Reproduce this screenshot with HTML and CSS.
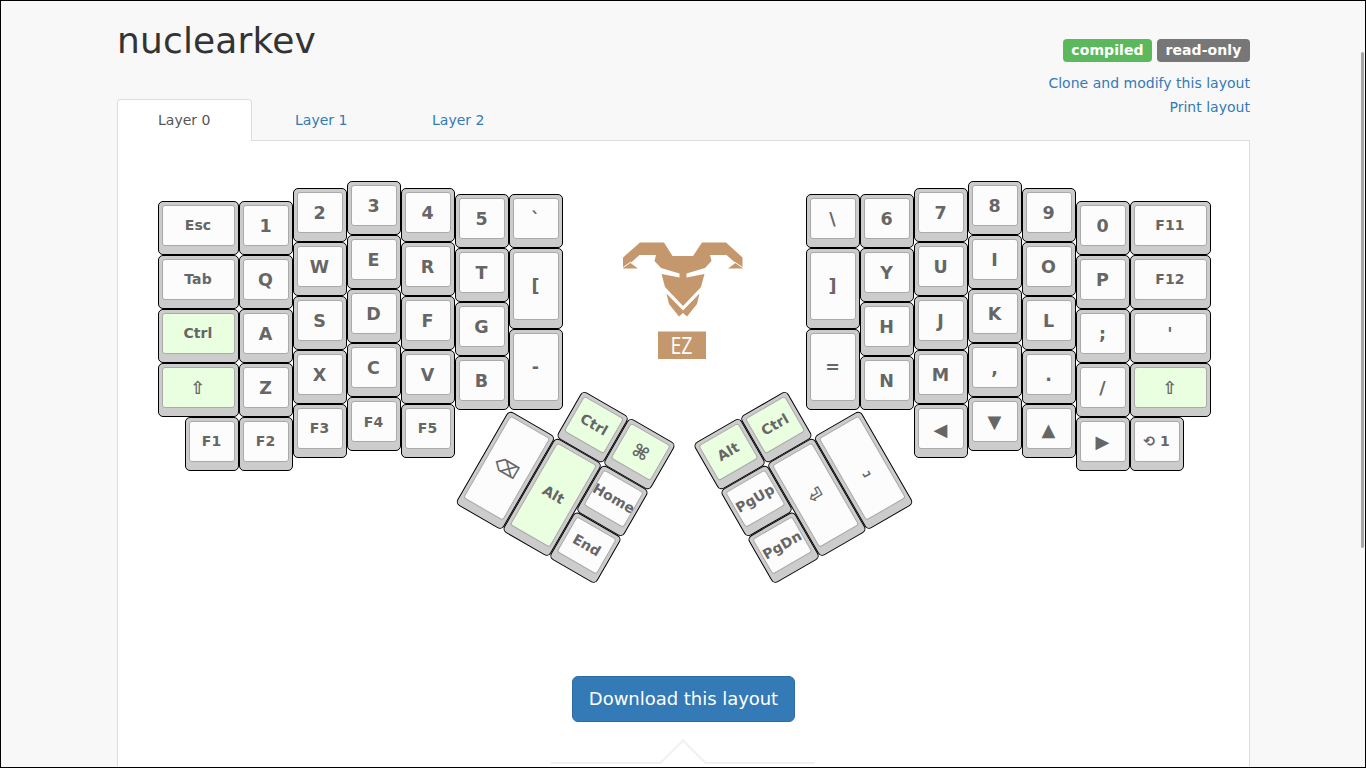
FILE: index.html
```html
<!DOCTYPE html>
<html lang="en">
<head>
<meta charset="utf-8">
<title>nuclearkev</title>
<link rel="stylesheet" href="styles.css">
</head>
<body>
<div class="window">
  <div class="scrollbar"></div>
  <main class="container">
    <header class="header">
      <h1>nuclearkev</h1>
      <div class="meta">
        <div class="badges"><span class="badge ok">compiled</span><span class="badge">read-only</span></div>
        <a>Clone and modify this layout</a>
        <a>Print layout</a>
      </div>
    </header>
    <nav class="tabs"><a class="tab active">Layer 0</a><a class="tab">Layer 1</a><a class="tab">Layer 2</a></nav>
    <section class="panel">
      <div class="keyboard">
        <div class="half">
          <div class="col wide s20"><div class="key"><b class="w">Esc</b></div><div class="key"><b class="w">Tab</b></div><div class="key mod"><b class="w">Ctrl</b></div><div class="key mod"><b class="sym">⇧</b></div><div class="key single end"><b class="w">F1</b></div></div>
          <div class="col s20"><div class="key"><b>1</b></div><div class="key"><b>Q</b></div><div class="key"><b>A</b></div><div class="key"><b>Z</b></div><div class="key"><b class="w">F2</b></div></div>
          <div class="col s7"><div class="key"><b>2</b></div><div class="key"><b>W</b></div><div class="key"><b>S</b></div><div class="key"><b>X</b></div><div class="key"><b class="w">F3</b></div></div>
          <div class="col"><div class="key"><b>3</b></div><div class="key"><b>E</b></div><div class="key"><b>D</b></div><div class="key"><b>C</b></div><div class="key"><b class="w f4">F4</b></div></div>
          <div class="col s7"><div class="key"><b>4</b></div><div class="key"><b>R</b></div><div class="key"><b>F</b></div><div class="key"><b>V</b></div><div class="key"><b class="w">F5</b></div></div>
          <div class="col s13"><div class="key"><b>5</b></div><div class="key"><b>T</b></div><div class="key"><b>G</b></div><div class="key"><b>B</b></div></div>
          <div class="col s13"><div class="key"><b>`</b></div><div class="key tall"><b>[</b></div><div class="key tall"><b>-</b></div></div>
        </div>
        <svg class="logo" width="120" height="118" viewBox="0 0 120 118">
          <g fill="#c5976c">
            <path d="M0 15.500 17 .5H41L49.500 14H70L79 .5H103L119.500 15.500V26.500H105L112.500 21 103.500 13H87L88.500 19 82 26 63.500 31.500V35.500L81.500 32 78 45 60 64 42 45 38.500 32 56.500 35.500V31.500L38 26 31.500 19 33 13H16.500L7.500 21 15 26.500H0Z"/>
            <path d="M43.500 51.500 60 68.500 76.500 51.500 74 62 64 74.500 60 71 56 74.500 46 62Z"/>
            <path d="M35 89.500H83V117H35Z"/>
          </g>
          <path d="M0 25.500 8 20M119.500 25.500 111.500 20" stroke="#fff" fill="none"/>
          <text x="58.500" y="111.500" textLength="22" lengthAdjust="spacingAndGlyphs">EZ</text>
        </svg>
        <div class="half">
          <div class="col s13"><div class="key"><b>\</b></div><div class="key tall"><b>]</b></div><div class="key tall"><b>=</b></div></div>
          <div class="col s13"><div class="key"><b>6</b></div><div class="key"><b>Y</b></div><div class="key"><b>H</b></div><div class="key"><b>N</b></div></div>
          <div class="col s7"><div class="key"><b>7</b></div><div class="key"><b>U</b></div><div class="key"><b>J</b></div><div class="key"><b>M</b></div><div class="key"><b class="sym low">◀</b></div></div>
          <div class="col"><div class="key"><b>8</b></div><div class="key"><b>I</b></div><div class="key"><b>K</b></div><div class="key"><b>,</b></div><div class="key"><b class="sym">▼</b></div></div>
          <div class="col s7"><div class="key"><b>9</b></div><div class="key"><b>O</b></div><div class="key"><b>L</b></div><div class="key"><b>.</b></div><div class="key"><b class="sym low">▲</b></div></div>
          <div class="col s20"><div class="key"><b>0</b></div><div class="key"><b>P</b></div><div class="key"><b>;</b></div><div class="key"><b>/</b></div><div class="key"><b class="sym">▶</b></div></div>
          <div class="col wide s20"><div class="key"><b class="w">F11</b></div><div class="key"><b class="w">F12</b></div><div class="key"><b>'</b></div><div class="key mod"><b class="sym">⇧</b></div><div class="key single"><b class="w">⟲ 1</b></div></div>
        </div>
        <div class="thumb left">
          <div class="key mod c2 r1"><b class="w">Ctrl</b></div>
          <div class="key mod c3 r1"><b class="sym">⌘</b></div>
          <div class="key c1 span"><b class="sym">⌫</b></div>
          <div class="key mod c2 span"><b class="w">Alt</b></div>
          <div class="key c3 r2"><b class="w">Home</b></div>
          <div class="key c3 r3"><b class="w">End</b></div>
        </div>
        <div class="thumb right">
          <div class="key mod c1 r1"><b class="w">Alt</b></div>
          <div class="key mod c2 r1"><b class="w">Ctrl</b></div>
          <div class="key c1 r2"><b class="w">PgUp</b></div>
          <div class="key c1 r3"><b class="w">PgDn</b></div>
          <div class="key c2 span"><b class="sym">⏎</b></div>
          <div class="key c3 span"><b class="space">␣</b></div>
        </div>
      </div>
      <a class="download">Download this layout</a>
      <svg class="divider" width="264" height="26" viewBox="0 0 264 26"><path d="M0 24H109.500L132 1.500 154.500 24H264" fill="none" stroke="#f1f1f1" stroke-width="2"/></svg>
    </section>
  </main>
</div>
</body>
</html>
```
FILE: styles.css
```css
* { box-sizing: border-box; }
body { margin: 0; font: 14px/20px "DejaVu Sans", sans-serif; color: #333; }
.window { position: relative; width: 1366px; height: 768px; overflow: hidden; border: 1px solid #000; background: #f8f8f8; }
.scrollbar { position: absolute; left: 1360px; top: 51px; width: 3px; height: 496px; border-radius: 2px; background: #a3a8a6; }
.container { width: 1133px; margin-left: 116px; }
.header { display: flex; justify-content: space-between; height: 98px; }
h1 { margin: 20px 0 0; font-size: 36px; line-height: 40px; font-weight: 400; letter-spacing: .15px; }
.meta { display: flex; flex-direction: column; align-items: flex-end; padding-top: 38px; }
.meta a { line-height: 24px; letter-spacing: .02px; }
.badges { display: flex; gap: 5px; margin-bottom: 9px; }
.badge { width: 93px; height: 23px; border-radius: 4px; background: #777; color: #fff; font-weight: 700; line-height: 22px; text-align: center; letter-spacing: .08px; }
.badge.ok { width: 89px; background: #5cb85c; }
a { color: #337ab7; }
.tabs { display: flex; gap: 2px; height: 41px; }
.tab { width: 135px; height: 41px; line-height: 20px; padding: 11px 0 0 41px; }
.tab.active { position: relative; height: 42px; border: 1px solid #ddd; border-bottom: 0; border-radius: 4px 4px 0 0; background: #fff; color: #555; padding: 10px 0 0 40px; }
.panel { display: flex; flex-direction: column; align-items: center; height: 640px; border: 1px solid #ddd; background: #fff; }
.keyboard { position: relative; display: flex; justify-content: space-between; width: 1053px; height: 495px; margin: 40px 0 0 1px; flex: none; }
.half { display: flex; align-items: flex-start; }
.col { width: 54px; display: flex; flex-direction: column; }
.wide { width: 81px; }
.s7 { padding-top: 7px; }
.s13 { padding-top: 13px; }
.s20 { padding-top: 20px; }
.key { height: 54px; padding: 3px 3px 8px; border: 1px solid #000; border-radius: 5px; background: #ccc; color: #666; }
.key b { display: flex; align-items: center; justify-content: center; height: 100%; border: 1px solid #aaa; border-radius: 3px; background: #fcfcfc; font-size: 17.5px; line-height: 20px; white-space: nowrap; }
.key b.w { font-size: 14px; padding-bottom: 2px; letter-spacing: .1px; }
.key b.f4 { padding-bottom: 0; }
.key b.sym { font-size: 18px; }
.key b.low { padding-top: 2px; }
.key b.space { font-size: 12.5px; padding: 5px 0 0 1px; }
.mod b { background: #e9ffe0; }
.tall { height: 81px; }
.single { width: 54px; }
.end { align-self: flex-end; }
.logo { margin: 61px 0 0 -3px; }
.logo text { fill: #fff; font: 24px "Open Sans", sans-serif; text-anchor: middle; }
.thumb { position: absolute; top: 174.5px; display: grid; grid-template: repeat(3, 54px) / repeat(3, 54px); }
.thumb.left { left: 351px; transform-origin: 0 54px; transform: rotate(30deg); }
.thumb.right { left: 540px; transform-origin: 162px 54px; transform: rotate(-30deg); }
.c1 { grid-column: 1; }
.c2 { grid-column: 2; }
.c3 { grid-column: 3; }
.r1 { grid-row: 1; }
.r2 { grid-row: 2; }
.r3 { grid-row: 3; }
.span { grid-row: 2 / 4; height: 108px; }
.download { width: 223px; height: 46px; border: 1px solid #2e6da4; border-radius: 6px; background: #337ab7; color: #fff; font-size: 18px; line-height: 44px; text-align: center; flex: none; letter-spacing: -.03px; }
.divider { flex: none; margin: 17px 2px 0 0; }
```
